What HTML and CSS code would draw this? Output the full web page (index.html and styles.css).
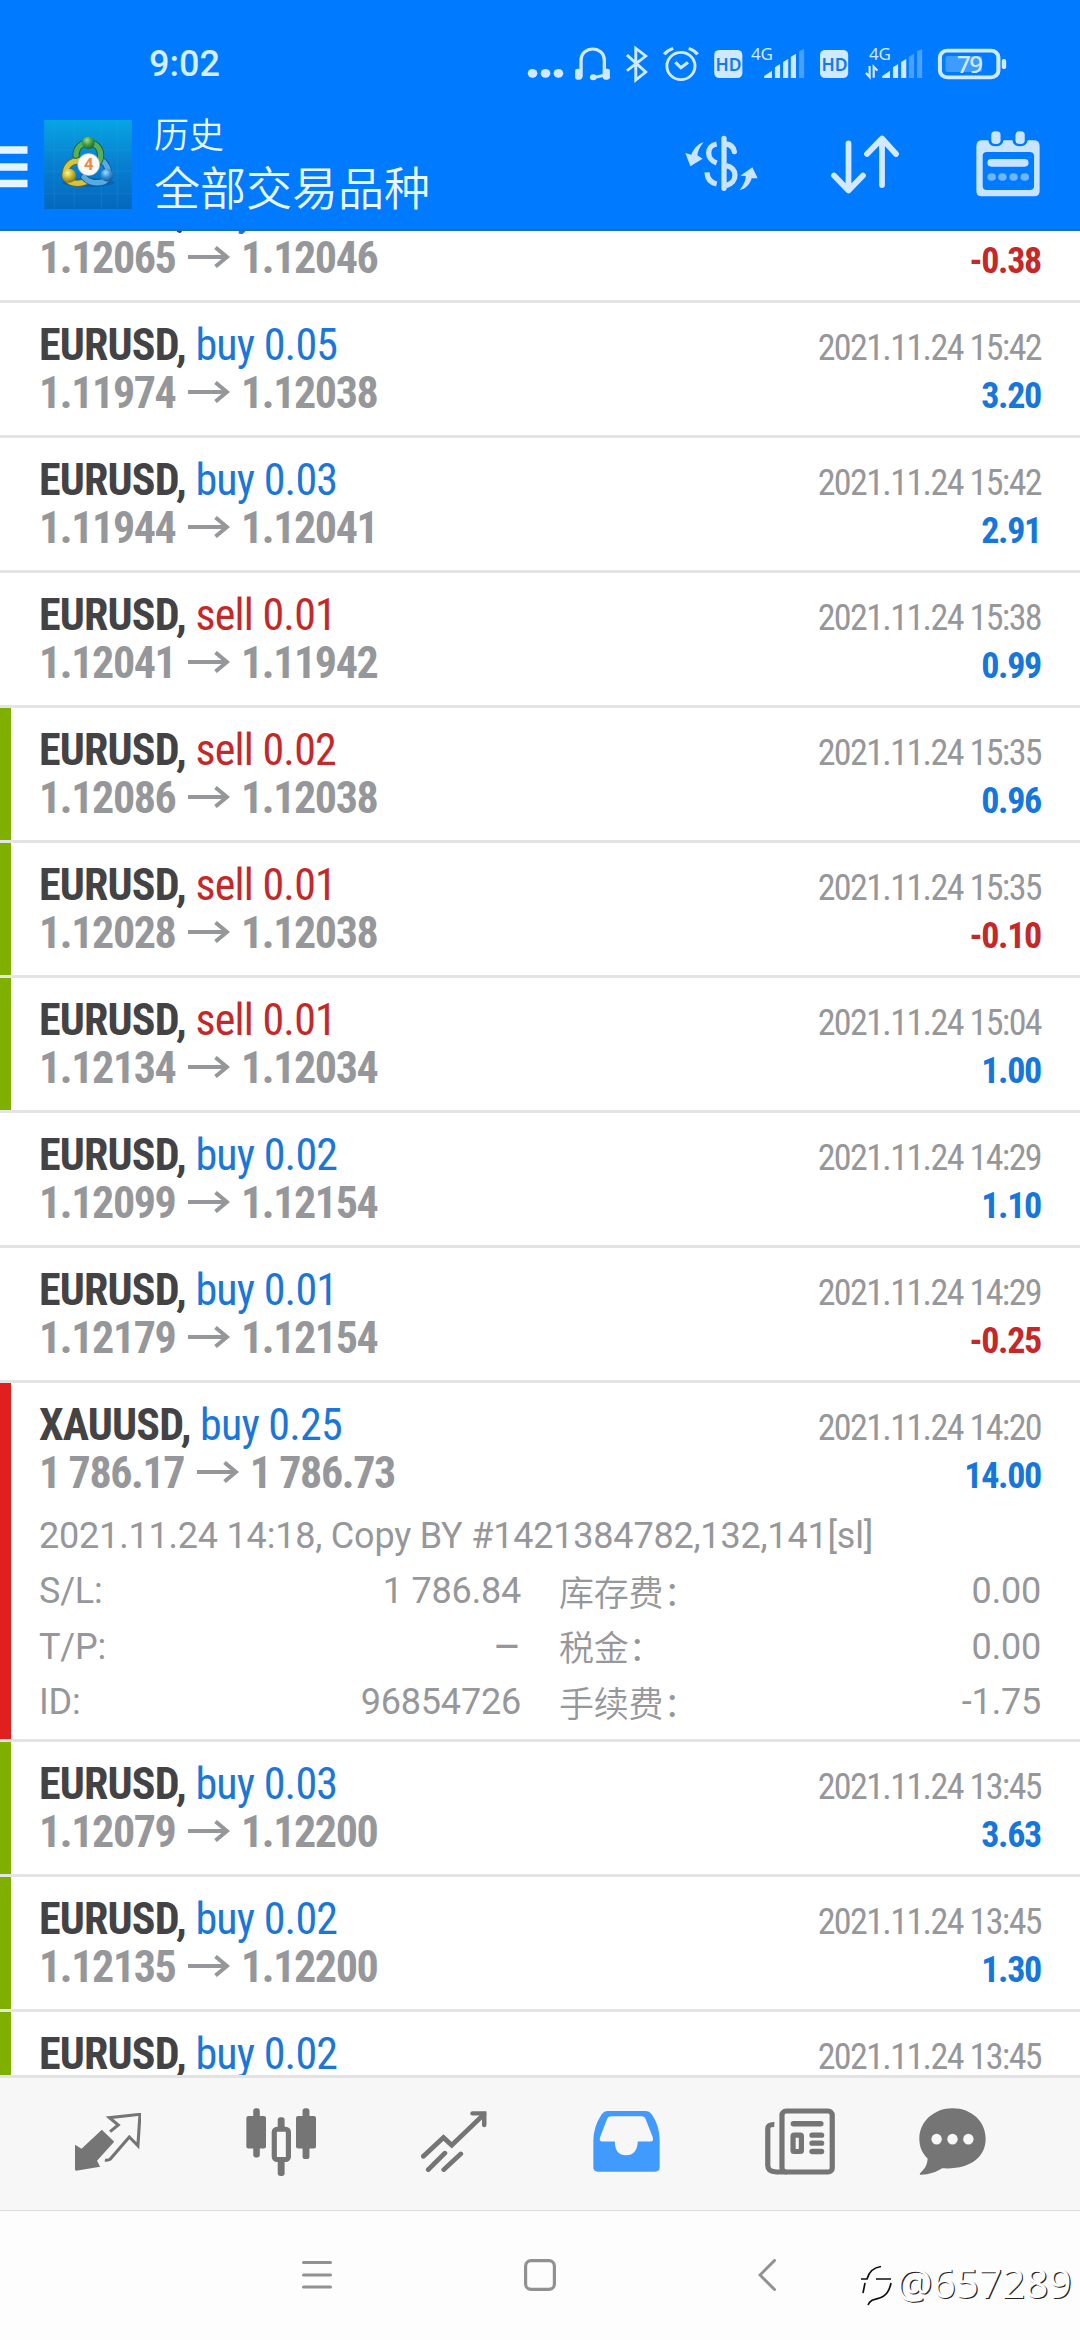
FILE: index.html
```html
<!DOCTYPE html>
<html lang="zh-CN">
<head>
<meta charset="utf-8">
<title>历史</title>
<link rel="stylesheet" href="styles.css">
</head>
<body>
<svg width="0" height="0" class="defs">
  <symbol id="arrow" viewBox="0 0 42 22"><path d="M0 11H38M27.5 1.5L39 11L27.5 20.5" fill="none" stroke="#96979a" stroke-width="4"/></symbol>
</svg>
<header class="top">
  <div class="status">
    <span class="clock">9:02</span>
    <svg class="status-icons" width="500" height="90" viewBox="520 0 500 90">
      <g transform="translate(500 0) scale(.37 .3333)" fill="#cfeaff" stroke="none">
        <circle cx="88" cy="220" r="13"/><circle cx="123" cy="220" r="13"/><circle cx="158" cy="220" r="13"/>
        <path d="M219 232V182C219 135 282 135 282 182V232M282 226L252 233" fill="none" stroke="#cfeaff" stroke-width="9"/>
        <rect x="203" y="206" width="19" height="33" rx="7"/><rect x="278" y="206" width="19" height="33" rx="7"/><circle cx="252" cy="232" r="9"/>
        <path d="M343 165L394 216L367 240V145L394 168L343 212" fill="none" stroke="#cfeaff" stroke-width="8"/>
        <ellipse cx="489" cy="198" rx="38" ry="41" fill="none" stroke="#cfeaff" stroke-width="8"/>
        <path d="M474 187L489 203L508 187M444 163Q452 151 468 145M534 163Q526 151 510 145" fill="none" stroke="#cfeaff" stroke-width="9"/>
        <rect x="579" y="150" width="76" height="84" rx="14"/><rect x="865" y="150" width="76" height="84" rx="14"/>
        <path d="M714 234V228L735 212V234ZM743 234V202L757 192V234ZM765 234V186L779 177V234ZM786 234V170L800 161V234Z"/>
        <path d="M808 234V154L822 147V234Z" opacity=".35"/>
        <path d="M1033 234V228L1054 212V234ZM1062 234V202L1076 192V234ZM1084 234V186L1098 177V234Z"/>
        <path d="M1105 234V170L1119 161V234ZM1127 234V154L1141 147V234Z" opacity=".35"/>
        <path d="M989 219L999 231V198M1020 212L1010 200V233" fill="none" stroke="#cfeaff" stroke-width="6"/>
        <rect x="1204" y="168" width="99" height="48" rx="6" opacity=".3"/>
        <rect x="1189" y="152" width="158" height="80" rx="20" fill="none" stroke="#cfeaff" stroke-width="11"/>
        <rect x="1356" y="177" width="12" height="30" rx="5"/>
      </g>
      <g font-family="Noto Sans, sans-serif" fill="#cfeaff">
        <text x="715.5" y="70.5" font-size="17.5" font-weight="600" fill="#1479f0" textLength="26">HD</text>
        <text x="821.5" y="70.5" font-size="17.5" font-weight="600" fill="#1479f0" textLength="26">HD</text>
        <text x="751" y="59.5" font-size="17" textLength="22">4G</text>
        <text x="869" y="59.5" font-size="17" textLength="22">4G</text>
        <text x="957" y="73" font-size="24" font-weight="500" textLength="26">79</text>
      </g>
    </svg>
  </div>
  <div class="appbar">
    <svg class="burger" width="28" height="42" viewBox="0 0 28 42"><path d="M0 4H27.5M0 21H27.5M0 37.500H27.500" stroke="#e4f5ff" stroke-width="7.5"/></svg>
    <svg class="logo" width="88" height="89" viewBox="12 18 264 268">
      <defs>
        <linearGradient id="sky" x1="0" y1="0" x2="0" y2="1"><stop offset="0" stop-color="#07a5e2"/><stop offset=".5" stop-color="#087fd0"/><stop offset="1" stop-color="#0468bd"/></linearGradient>
        <radialGradient id="gr" cx=".4" cy=".3" r=".7"><stop offset="0" stop-color="#a6e08c"/><stop offset=".5" stop-color="#459f47"/><stop offset="1" stop-color="#176b34"/></radialGradient>
        <radialGradient id="ye" cx=".4" cy=".3" r=".7"><stop offset="0" stop-color="#fff6a0"/><stop offset=".5" stop-color="#cdb92e"/><stop offset="1" stop-color="#857714"/></radialGradient>
        <radialGradient id="bl" cx=".4" cy=".3" r=".7"><stop offset="0" stop-color="#a4dcff"/><stop offset=".5" stop-color="#3d95d6"/><stop offset="1" stop-color="#155c9f"/></radialGradient>
      </defs>
      <rect x="12" y="18" width="264" height="268" fill="url(#sky)"/>
      <path d="M12 108H276M12 172H276M12 240H276M42 18V286M102 18V286M184 18V286M232 18V286" stroke="#35a9ee" stroke-opacity=".3" stroke-width="2"/>
      <ellipse cx="145" cy="206" rx="78" ry="14" fill="#024b92" opacity=".4"/>
      <g stroke-linecap="round" fill="none">
        <path d="M122 141C90 138 74 160 76 186C84 212 116 212 136 204" stroke="#766b18" stroke-width="21"/><path d="M122 141C90 138 74 160 76 186C84 212 116 212 136 204" stroke="#d5c43e" stroke-width="16"/>
        <path d="M132 190C150 212 196 214 206 188C208 162 198 148 184 138" stroke="#135797" stroke-width="21"/><path d="M132 190C150 212 196 214 206 188C208 162 198 148 184 138" stroke="#58abe0" stroke-width="16"/>
        <path d="M108 124C108 74 182 74 182 124C182 134 178 142 174 146" stroke="#176432" stroke-width="21"/><path d="M108 124C108 74 182 74 182 124C182 134 178 142 174 146" stroke="#59ae58" stroke-width="16"/>
      </g>
      <circle cx="145" cy="87" r="19" fill="url(#gr)"/><circle cx="87" cy="186" r="21" fill="url(#ye)"/><circle cx="201" cy="184" r="19" fill="url(#bl)"/>
      <circle cx="146" cy="152" r="33" fill="#fbfaf8" stroke="#b9b9b0" stroke-width="2"/>
      <text x="146" y="169" text-anchor="middle" font-family="Roboto, sans-serif" font-weight="700" font-size="50" fill="#ee8a40">4</text>
    </svg>
    <div class="titles"><div class="t1">历史</div><div class="t2">全部交易品种</div></div>
    <svg class="act-cur" width="74" height="58" viewBox="17 30 222 174" fill="none" stroke="#c8e4ff" stroke-width="16">
      <path d="M134 40V190" stroke-linecap="round"/>
      <path d="M112 57C80 63 80 103 112 114M83 142C84 161 94 173 112 177"/>
      <path d="M140 57C155 59 163 66 165 80" stroke-linecap="round"/><path d="M140 122C175 128 177 171 140 182"/>
      <path d="M73 52C61 65 56 78 54 91L70 101L33 124L18 84L36 89C43 72 54 57 73 52ZM180 196C193 181 200 163 199 153L183 152L219 127L235 160L217 160C212 178 199 192 180 196Z" fill="#c8e4ff" stroke="none"/>
    </svg>
    <svg class="act-sort" width="68" height="59" viewBox="0 0 68 59" fill="none" stroke="#d2e9ff" stroke-width="5.800" stroke-linecap="round" stroke-linejoin="round"><path d="M17.500 8.500V55M3 40.500L17.500 55.500L32 40.500M51 50V4M36 19L51 3.500L65 19"/></svg>
    <svg class="act-cal" width="64" height="66" viewBox="1287 394 172 198" preserveAspectRatio="none">
      <path fill-rule="evenodd" fill="#c8e4ff" d="M1302 422H1320Q1322 440 1340 440T1361 422H1385Q1387 440 1405 440T1426 422H1444Q1458 422 1458 440V574Q1458 590 1444 590H1302Q1288 590 1288 574V440Q1288 422 1302 422ZM1316 457Q1305 457 1305 469V559Q1305 571 1316 571H1431Q1443 571 1443 559V469Q1443 457 1431 457Z"/>
      <rect x="1328" y="395" width="25" height="38" rx="11" fill="#c8e4ff"/><rect x="1393" y="395" width="25" height="38" rx="11" fill="#c8e4ff"/>
      <rect x="1318" y="478" width="110" height="23" rx="10" fill="#c8e4ff"/>
      <g fill="#6fb5ff"><circle cx="1329" cy="532" r="11.500"/><circle cx="1358" cy="532" r="11.500"/><circle cx="1388" cy="532" r="11.500"/><circle cx="1418" cy="532" r="11.500"/></g>
    </svg>
  </div>
</header>
<main class="list">
  <div class="scroll">
    <article class="row"><div class="line"><b class="sym">EURUSD,</b><span class="op buy">buy 0.03</span><time>2021.11.24 15:42</time></div><div class="line"><b class="px">1.12065</b><svg class="arr"><use href="#arrow"/></svg><b class="px">1.12046</b><b class="pl neg">-0.38</b></div></article>
    <article class="row"><div class="line"><b class="sym">EURUSD,</b><span class="op buy">buy 0.05</span><time>2021.11.24 15:42</time></div><div class="line"><b class="px">1.11974</b><svg class="arr"><use href="#arrow"/></svg><b class="px">1.12038</b><b class="pl">3.20</b></div></article>
    <article class="row"><div class="line"><b class="sym">EURUSD,</b><span class="op buy">buy 0.03</span><time>2021.11.24 15:42</time></div><div class="line"><b class="px">1.11944</b><svg class="arr"><use href="#arrow"/></svg><b class="px">1.12041</b><b class="pl">2.91</b></div></article>
    <article class="row"><div class="line"><b class="sym">EURUSD,</b><span class="op sell">sell 0.01</span><time>2021.11.24 15:38</time></div><div class="line"><b class="px">1.12041</b><svg class="arr"><use href="#arrow"/></svg><b class="px">1.11942</b><b class="pl">0.99</b></div></article>
    <article class="row tp"><div class="line"><b class="sym">EURUSD,</b><span class="op sell">sell 0.02</span><time>2021.11.24 15:35</time></div><div class="line"><b class="px">1.12086</b><svg class="arr"><use href="#arrow"/></svg><b class="px">1.12038</b><b class="pl">0.96</b></div></article>
    <article class="row tp"><div class="line"><b class="sym">EURUSD,</b><span class="op sell">sell 0.01</span><time>2021.11.24 15:35</time></div><div class="line"><b class="px">1.12028</b><svg class="arr"><use href="#arrow"/></svg><b class="px">1.12038</b><b class="pl neg">-0.10</b></div></article>
    <article class="row tp"><div class="line"><b class="sym">EURUSD,</b><span class="op sell">sell 0.01</span><time>2021.11.24 15:04</time></div><div class="line"><b class="px">1.12134</b><svg class="arr"><use href="#arrow"/></svg><b class="px">1.12034</b><b class="pl">1.00</b></div></article>
    <article class="row"><div class="line"><b class="sym">EURUSD,</b><span class="op buy">buy 0.02</span><time>2021.11.24 14:29</time></div><div class="line"><b class="px">1.12099</b><svg class="arr"><use href="#arrow"/></svg><b class="px">1.12154</b><b class="pl">1.10</b></div></article>
    <article class="row"><div class="line"><b class="sym">EURUSD,</b><span class="op buy">buy 0.01</span><time>2021.11.24 14:29</time></div><div class="line"><b class="px">1.12179</b><svg class="arr"><use href="#arrow"/></svg><b class="px">1.12154</b><b class="pl neg">-0.25</b></div></article>
    <article class="row sl open"><div class="line"><b class="sym">XAUUSD,</b><span class="op buy">buy 0.25</span><time>2021.11.24 14:20</time></div><div class="line"><b class="px">1 786.17</b><svg class="arr"><use href="#arrow"/></svg><b class="px">1 786.73</b><b class="pl">14.00</b></div>
      <div class="comment">2021.11.24 14:18, Copy BY #1421384782,132,141[sl]</div>
      <div class="details">
        <span>S/L:</span><span class="num">1 786.84</span><span class="cn">库存费：</span><span class="num">0.00</span>
        <span>T/P:</span><span class="num dash">–</span><span class="cn">税金：</span><span class="num">0.00</span>
        <span>ID:</span><span class="num">96854726</span><span class="cn">手续费：</span><span class="num">-1.75</span>
      </div>
    </article>
    <article class="row tp"><div class="line"><b class="sym">EURUSD,</b><span class="op buy">buy 0.03</span><time>2021.11.24 13:45</time></div><div class="line"><b class="px">1.12079</b><svg class="arr"><use href="#arrow"/></svg><b class="px">1.12200</b><b class="pl">3.63</b></div></article>
    <article class="row tp"><div class="line"><b class="sym">EURUSD,</b><span class="op buy">buy 0.02</span><time>2021.11.24 13:45</time></div><div class="line"><b class="px">1.12135</b><svg class="arr"><use href="#arrow"/></svg><b class="px">1.12200</b><b class="pl">1.30</b></div></article>
    <article class="row tp"><div class="line"><b class="sym">EURUSD,</b><span class="op buy">buy 0.02</span><time>2021.11.24 13:45</time></div></article>
  </div>
</main>
<nav class="tabs">
  <span class="tab"><svg width="66" height="58" viewBox="219 220 192 174" preserveAspectRatio="none"><path d="M297 270L333 306L283 363L292 381L222 393Q219 393 219 389V315L238 327Z" fill="#757575"/><path d="M321 276L345 256L319 234L408 224L402 318L377 292L321 359Q315 363 306 361" fill="none" stroke="#757575" stroke-width="9"/></svg></span>
  <span class="tab"><svg width="70" height="68" viewBox="714 203 203 205" preserveAspectRatio="none"><g fill="#757575"><rect x="715" y="227" width="57" height="98" rx="6"/><rect x="859" y="227" width="58" height="98" rx="6"/><rect x="735" y="204" width="19" height="148" rx="8"/><rect x="878" y="204" width="20" height="153" rx="8"/><rect x="806" y="231" width="20" height="40" rx="8"/><rect x="806" y="350" width="20" height="58" rx="8"/></g><rect x="796" y="267" width="41" height="91" rx="8" fill="#f7f7f7" stroke="#757575" stroke-width="15"/></svg></span>
  <span class="tab"><svg width="66" height="61" viewBox="1223 212 191 182" preserveAspectRatio="none"><path d="M1230 347L1288 291L1312 314L1405 222M1244 387L1292 338M1289 387L1338 340" fill="none" stroke="#757575" stroke-width="14" stroke-linecap="round" stroke-linejoin="miter"/><path d="M1372 219H1406V254" fill="none" stroke="#757575" stroke-width="13" stroke-linecap="round"/></svg></span>
  <span class="tab"><svg width="67" height="61" viewBox="158 212 193 182" preserveAspectRatio="none"><path fill-rule="evenodd" fill="#419bff" d="M199 212H311Q320 212 327 222Q350 255 350 300V380Q350 393 337 393H172Q159 393 159 380V300Q159 260 183 222Q190 212 199 212ZM211 228Q202 228 198 237L180 286Q173 303 184 303H221Q221 344 253 344T287 303H323Q334 303 330 290L310 237Q307 228 297 228Z"/></svg></span>
  <span class="tab"><svg width="70" height="67" viewBox="657 203 202 200" preserveAspectRatio="none"><g fill="none" stroke="#757575"><rect x="706" y="212" width="145" height="182" rx="12" stroke-width="15"/><path d="M684 252Q664 251 665 267V375Q665 394 690 394H720" stroke-width="15"/><path d="M739 250H818M793 284H820M793 308H820M793 333H820" stroke-width="16" stroke-linecap="round"/><rect x="738" y="284" width="24" height="49" rx="3" stroke-width="15"/></g></svg></span>
  <span class="tab last"><svg width="67" height="67" viewBox="1102 203 194 200" preserveAspectRatio="none"><path d="M1199 204C1255 204 1295 244 1295 295C1295 350 1250 388 1169 383C1152 395 1128 403 1106 402Q1103 401 1105 398C1117 387 1126 375 1127 354C1111 338 1103 319 1103 295C1103 244 1145 204 1199 204Z" fill="#757575"/><g fill="#f7f7f7"><ellipse cx="1153" cy="296" rx="15" ry="16"/><ellipse cx="1199" cy="296" rx="15" ry="16"/><ellipse cx="1245" cy="296" rx="15" ry="16"/></g></svg></span>
</nav>
<footer class="sysnav">
  <svg class="recent" width="30" height="32" viewBox="0 0 30 32"><path d="M1.500 3.500H28.500M1.500 16H28.500M1.500 28H28.500" stroke="#919191" stroke-width="3" stroke-linecap="round"/></svg>
  <svg class="home" width="32" height="32" viewBox="0 0 32 32"><rect x="1.600" y="1.600" width="28.800" height="28.800" rx="5.500" fill="none" stroke="#919191" stroke-width="3.200"/></svg>
  <svg class="back" width="18" height="32" viewBox="0 0 18 32"><path d="M16.500 1.500L2 16L16.500 30.500" fill="none" stroke="#919191" stroke-width="3" stroke-linecap="round"/></svg>
  <div class="mark">
    <svg width="38" height="44" viewBox="0 0 38 44" fill="none" stroke="#111" stroke-width="1.700"><path d="M3 14H9Q12 3 23 1.500M7 18L5 28M18 14H33M33 18Q31 28 25 31.500C19 35 13 33 10 40"/></svg>
    <span>@657289</span>
  </div>
</footer>
</body>
</html>
```
FILE: styles.css
```css
* { box-sizing: border-box; }
body { margin: 0; width: 1080px; height: 2340px; overflow: hidden; display: flex; flex-direction: column; background: #fff; font-family: Roboto, "Noto Sans CJK SC", sans-serif; }
svg { display: block; flex: none; }
.defs { position: absolute; }
.top { flex: none; height: 231px; background: #007aff; border-bottom: 2px solid #1d6dc0; }
.status { height: 90px; display: flex; align-items: flex-start; padding-left: 149px; }
.clock { width: 371px; padding-top: 43px; font-weight: 500; font-size: 36px; line-height: 43px; color: #d4eeff; }
.appbar { display: flex; align-items: flex-start; color: #e8f7ff; }
.burger { margin-top: 56px; }
.logo { margin: 30px 0 0 16px; }
.titles { margin: 16px 0 0 22px; width: 532px; font-family: "Noto Sans CJK SC", sans-serif; font-weight: 350; }
.t1 { font-size: 35px; line-height: 53px; }
.t2 { font-size: 46px; line-height: 53px; }
.act-cur { margin-top: 45px; margin-left: -1px; }
.act-sort { margin: 45px 0 0 72px; }
.act-cal { margin: 41px 0 0 77px; }
.list { height: 1844px; overflow: hidden; flex: none; }
.scroll { margin-top: -63px; }
.row { position: relative; height: 135px; border-bottom: 3px solid #e4e4e5; padding: 18px 39px 0; }
.row.open { height: 359px; }
.tp::before, .sl::before { content: ""; position: absolute; left: 0; top: 0; bottom: 0; width: 11px; background: #7fb000; }
.sl::before { background: #e01f1f; }
.line { display: flex; align-items: baseline; height: 48px; line-height: 48px; font-family: "Roboto Condensed", Roboto, sans-serif; font-size: 44px; white-space: nowrap; }
.sym { color: #434345; letter-spacing: -0.85px; }
.op { margin-left: 9.5px; letter-spacing: -0.8px; }
.buy { color: #1b76da; }
.sell { color: #c42828; }
.line time { margin-left: auto; font-size: 36px; letter-spacing: -1.6px; color: #96979a; }
.px { color: #96979a; letter-spacing: -1.4px; }
.arr { width: 42px; height: 22px; margin: 0 11px 0 12.5px; align-self: center; transform: translateY(-1px); }
.pl { margin-left: auto; font-size: 36px; letter-spacing: -1.3px; color: #1576dc; }
.pl.neg { color: #c42828; }
.comment, .details { font-size: 36px; letter-spacing: -0.2px; color: #96979a; }
.comment { margin-top: 14px; line-height: 50px; white-space: nowrap; }
.details { display: grid; grid-template-columns: 100px 382px 140px 1fr; grid-auto-rows: 55.5px; line-height: 55.5px; margin-top: 3px; white-space: nowrap; }
.num { text-align: right; }
.dash { font-size: 43px; }
.cn { padding-left: 38px; margin-top: -1.5px; font-family: "Noto Sans CJK SC", sans-serif; font-weight: 350; font-size: 35px; }
.tabs { flex: none; height: 136px; border-top: 3px solid #e3e3e4; border-bottom: 1px solid #dedede; background: #f7f7f7; display: flex; padding-left: 21px; }
.tab { width: 173px; display: flex; align-items: center; justify-content: center; padding-bottom: 5px; }
.last { width: 133px; }
.sysnav { flex: 1; display: flex; align-items: flex-start; padding-top: 48px; padding-left: 302px; background: #fdfdfd; }
.home { margin-left: 192px; }
.back { margin-left: 202px; }
.mark { display: flex; margin: 6px 0 0 82px; color: #fff; font-family: "Noto Sans", sans-serif; font-size: 40.5px; line-height: 36px; text-shadow: 1.200px 1.200px 0.5px #222; }
```
